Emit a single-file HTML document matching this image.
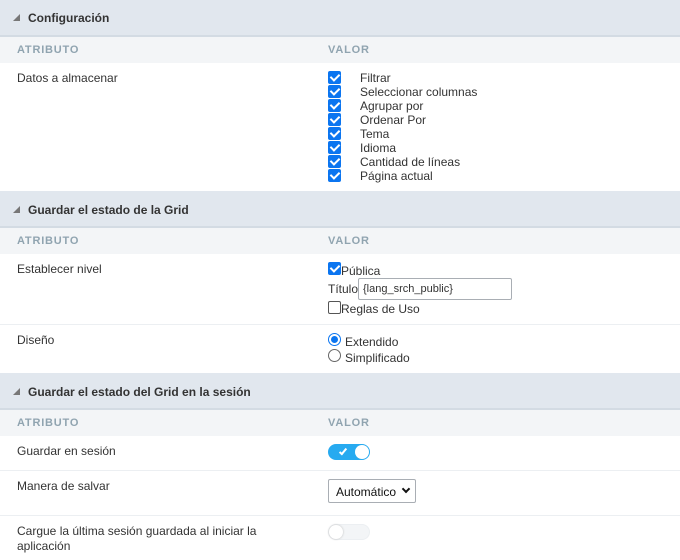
<!DOCTYPE html>
<html><head><meta charset="utf-8"><style>
*{box-sizing:border-box;margin:0;padding:0}
body{width:680px;height:560px;overflow:hidden;background:#fff;font-family:"Liberation Sans",Arial,sans-serif;font-size:12px;color:#333;position:relative}
.a{position:absolute}
.sh{position:absolute;left:0;width:680px;background:#e1e7ee;border-bottom:2px solid #d3dbe3;font-weight:bold;font-size:12px;color:#333}
.sh span{position:absolute;left:28px;top:11px}
.sh i{position:absolute;left:13px;top:14px;width:0;height:0;border-left:7px solid transparent;border-bottom:7px solid #777}
.ch{position:absolute;left:0;width:680px;height:26px;background:#f3f5f7;color:#90a4b0;font-weight:bold;font-size:11px;letter-spacing:0.8px}
.ch b{position:absolute;top:7px}
.ln{position:absolute;left:0;width:680px;height:1px;background:#eceff2}
.cb{position:absolute;width:13px;height:13px;background:#0b75f0;border-radius:2px}
.cb:after{content:"";position:absolute;left:4px;top:1px;width:4px;height:7px;border:solid #fff;border-width:0 2px 2px 0;transform:rotate(45deg)}
.t{position:absolute;white-space:nowrap}
</style></head><body>
<div class="sh" style="top:0;height:37px"><i></i><span>Configuración</span></div>
<div class="ch" style="top:37px"><b style="left:17px">ATRIBUTO</b><b style="left:328px">VALOR</b></div>
<div class="t" style="left:17px;top:71px">Datos a almacenar</div>
<div class="cb" style="left:328px;top:71px"></div><div class="t" style="left:360px;top:71px">Filtrar</div>
<div class="cb" style="left:328px;top:85px"></div><div class="t" style="left:360px;top:85px">Seleccionar columnas</div>
<div class="cb" style="left:328px;top:99px"></div><div class="t" style="left:360px;top:99px">Agrupar por</div>
<div class="cb" style="left:328px;top:113px"></div><div class="t" style="left:360px;top:113px">Ordenar Por</div>
<div class="cb" style="left:328px;top:127px"></div><div class="t" style="left:360px;top:127px">Tema</div>
<div class="cb" style="left:328px;top:141px"></div><div class="t" style="left:360px;top:141px">Idioma</div>
<div class="cb" style="left:328px;top:155px"></div><div class="t" style="left:360px;top:155px">Cantidad de líneas</div>
<div class="cb" style="left:328px;top:169px"></div><div class="t" style="left:360px;top:169px">Página actual</div>

<div class="sh" style="top:191px;height:37px"><i style="top:15px"></i><span style="top:12px">Guardar el estado de la Grid</span></div>
<div class="ch" style="top:228px"><b style="left:17px">ATRIBUTO</b><b style="left:328px">VALOR</b></div>
<div class="t" style="left:17px;top:262px">Establecer nivel</div>
<div class="cb" style="left:328px;top:262px"></div><div class="t" style="left:341px;top:264px">Pública</div>
<div class="t" style="left:328px;top:282px">Título</div>
<div class="a" style="left:358px;top:278px;width:154px;height:22px;border:1px solid #a9aeb4;border-radius:2px;font-size:11px;padding:4px 4px">{lang_srch_public}</div>
<div class="a" style="left:328px;top:301px;width:13px;height:13px;border:1px solid #555;border-radius:2px"></div><div class="t" style="left:341px;top:302px">Reglas de Uso</div>
<div class="ln" style="top:324px"></div>
<div class="t" style="left:17px;top:333px">Diseño</div>
<div class="a" style="left:328px;top:333px;width:13px;height:13px;border:1px solid #0b75f0;border-radius:50%"><div class="a" style="left:2px;top:2px;width:7px;height:7px;background:#0b75f0;border-radius:50%"></div></div>
<div class="t" style="left:345px;top:335px">Extendido</div>
<div class="a" style="left:328px;top:349px;width:13px;height:13px;border:1px solid #666;border-radius:50%"></div>
<div class="t" style="left:345px;top:351px">Simplificado</div>

<div class="sh" style="top:373px;height:37px"><i style="top:15px"></i><span style="top:12px">Guardar el estado del Grid en la sesión</span></div>
<div class="ch" style="top:410px"><b style="left:17px">ATRIBUTO</b><b style="left:328px">VALOR</b></div>
<div class="t" style="left:17px;top:444px">Guardar en sesión</div>
<div class="a" style="left:328px;top:444px;width:42px;height:16px;border-radius:8px;background:#27aaf0"><div class="a" style="left:27px;top:1px;width:14px;height:14px;border-radius:50%;background:#fff"></div><div class="a" style="left:13px;top:3px;width:4px;height:8px;border:solid #fff;border-width:0 2px 2px 0;transform:rotate(40deg)"></div></div>
<div class="ln" style="top:470px"></div>
<div class="t" style="left:17px;top:479px">Manera de salvar</div>
<div class="a" style="left:328px;top:479px;width:88px;height:24px;border:1px solid #a9aeb4;border-radius:2px;background:#fff;color:#111;padding:5px 7px;font-size:12px">Automático<span class="a" style="right:6px;top:6px;width:6px;height:6px;border:solid #111;border-width:0 2px 2px 0;transform:rotate(45deg)"></span></div>
<div class="ln" style="top:515px"></div>
<div class="t" style="left:17px;top:524px;line-height:15px">Cargue la última sesión guardada al iniciar la<br>aplicación</div>
<div class="a" style="left:328px;top:524px;width:42px;height:16px;border-radius:8px;background:#f3f5f7;border:1px solid #eceff2"><div class="a" style="left:0;top:0;width:14px;height:14px;border-radius:50%;background:#fff;box-shadow:0 0 2px #bbb"></div></div>
</body></html>
